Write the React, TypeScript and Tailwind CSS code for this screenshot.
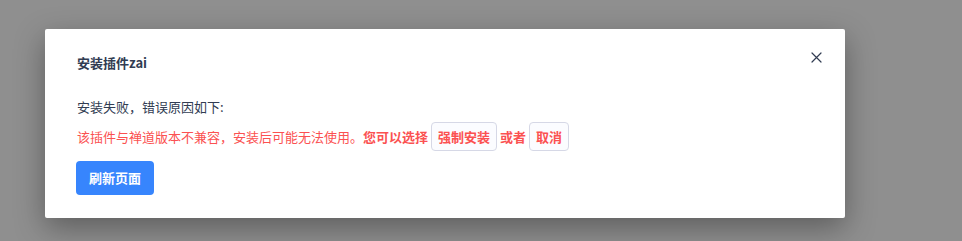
import React from 'react';

const font = { fontFamily: '"Noto Sans CJK SC", "Noto Sans", sans-serif' };

function CloseIcon() {
  return (
    <svg width="11" height="11" viewBox="0 0 11 11" fill="none">
      <path d="M1 1L10 10M10 1L1 10" stroke="#313c52" strokeWidth="1.2" strokeLinecap="round" />
    </svg>
  );
}

function InlineButton({ label }: { label: string }) {
  return (
    <button className="mx-[3px] h-[29px] rounded-[4px] border border-[#d6d8e6] bg-[#fbfcff] px-[6px] text-[13px] font-semibold leading-none text-[#fb5151]">
      {label}
    </button>
  );
}

export default function App() {
  return (
    <div className="h-[241px] w-[962px] overflow-hidden bg-[#8f8f8f] pl-[45px] pt-[29px]" style={font}>
      <div className="relative w-[800px] rounded-[2px] bg-white px-8 pb-[23px] pt-6 shadow-[0_10px_30px_rgba(0,0,0,0.35)]">
        <button className="absolute right-[23px] top-[23px] flex h-[11px] w-[11px] items-center justify-center">
          <CloseIcon />
        </button>
        <div className="text-[13px] font-bold leading-5 text-[#313c52]">安装插件zai</div>
        <div className="mt-6 text-[13px] leading-5 text-[#313c52]">安装失败，错误原因如下:</div>
        <div className="mt-[5px] flex h-[29px] items-center text-[13px] text-[#fb5151]">
          <span>该插件与禅道版本不兼容，安装后可能无法使用。</span>
          <span className="font-bold">您可以选择</span>
          <InlineButton label="强制安装" />
          <span className="font-bold">或者</span>
          <InlineButton label="取消" />
        </div>
        <button className="-ml-px mt-[10px] h-[34px] w-[78px] rounded-[4px] bg-[#3785fd] text-[13px] font-semibold text-white">
          刷新页面
        </button>
      </div>
    </div>
  );
}
